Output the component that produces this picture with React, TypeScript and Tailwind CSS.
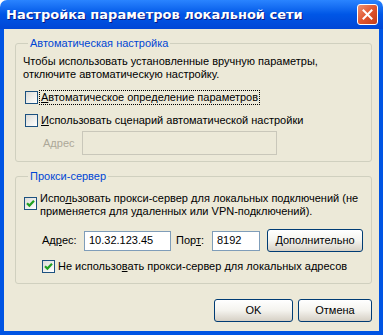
import React from "react";

const font = { fontFamily: '"Liberation Sans", Arial, sans-serif' };

function Check({ checked }: { checked?: boolean }) {
  return (
    <span className="relative inline-block w-[13px] h-[13px] shrink-0 border border-[#1C5180] bg-gradient-to-br from-[#DCDCD7] to-white">
      {checked && (
        <svg className="absolute left-[1px] top-[1px]" width="9" height="9" viewBox="0 0 9 9">
          <path d="M1 4.2 L3.4 6.6 L8 1.8" stroke="#21A121" strokeWidth="2.2" fill="none" />
        </svg>
      )}
    </span>
  );
}

function Btn({ children, w }: { children: React.ReactNode; w: string }) {
  return (
    <div
      className={`${w} h-[23px] rounded-[3px] border border-[#003C74] bg-gradient-to-b from-white via-[#F4F3EE] to-[#D6D0C5] flex items-center justify-center text-black shadow-[inset_0_-1px_0_#D6D0C5]`}
    >
      {children}
    </div>
  );
}

export default function App() {
  return (
    <div className="w-[383px] h-[335px] flex flex-col text-[11px] text-black" style={font}>
      {/* title bar */}
      <div className="h-[29px] shrink-0 rounded-t-[7px] bg-gradient-to-b from-[#2A84FF] via-[#0056E6] to-[#0046D6] flex items-center pl-[6px] pr-[5px]">
        <div className="flex-1 text-white font-bold text-[13px] [text-shadow:1px_1px_0_#0A1883]" style={{ fontFamily: '"DejaVu Sans", sans-serif' }}>
          Настройка параметров локальной сети
        </div>
        <div className="w-[21px] h-[21px] rounded-[3px] border border-white bg-gradient-to-br from-[#EE9070] via-[#E0552E] to-[#C23C18] flex items-center justify-center">
          <svg width="11" height="11" viewBox="0 0 11 11">
            <path d="M1.5 1.5 L9.5 9.5 M9.5 1.5 L1.5 9.5" stroke="white" strokeWidth="2" strokeLinecap="square" />
          </svg>
        </div>
      </div>
      {/* body */}
      <div className="flex-1 flex border-x-4 border-b-4 border-[#0054E3] bg-[#ECE9D8]">
        <div className="flex-1 flex flex-col pl-[11px] pr-[7px] pt-[8px]">
          <fieldset className="border border-[#D0D0BF] rounded-[3px] h-[125px] pl-[7px] pr-[6px]">
            <legend className="ml-[5px] px-[2px] text-[#0046D5] leading-[13px]">Автоматическая настройка</legend>
            <div className="mt-[5px] leading-[13px]">
              Чтобы использовать установленные вручную параметры,
              <br />
              отключите автоматическую настройку.
            </div>
            <div className="mt-[9px] flex items-center h-[14px] ml-[2px]">
              <Check />
              <span className="ml-[2px] px-[1px] outline-1 outline-dotted outline-black leading-[13px]">
                <u>А</u>втоматическое определение параметров
              </span>
            </div>
            <div className="mt-[9px] flex items-center h-[14px] ml-[2px]">
              <Check />
              <span className="ml-[3px]">
                <u>И</u>спользовать сценарий автоматической настройки
              </span>
            </div>
            <div className="mt-[4px] flex items-center ml-[20px]">
              <span className="w-[39px] text-[#ACA899]">А<u>д</u>рес</span>
              <div className="w-[195px] h-[24px] border border-[#C9C7BA] bg-[#ECE9D8]" />
            </div>
          </fieldset>
          <fieldset className="mt-[8px] border border-[#D0D0BF] rounded-[3px] h-[114px] pl-[7px] pr-[6px]">
            <legend className="ml-[5px] px-[2px] text-[#0046D5] leading-[13px]">Прокси-сервер</legend>
            <div className="mt-[14px] flex items-start ml-[1px]">
              <Check checked />
              <span className="ml-[3px] -mt-[5px] leading-[13px]">
                Испо<u>л</u>ьзовать прокси-сервер для локальных подключений (не
                <br />
                применяется для удаленных или VPN-подключений).
              </span>
            </div>
            <div className="mt-[11px] flex items-center ml-[19px]">
              <span className="w-[42px]">Ад<u>р</u>ес:</span>
              <div className="w-[87px] h-[20px] border border-[#7F9DB9] bg-white flex items-center pl-[4px]">10.32.123.45</div>
              <span className="ml-[5px] w-[36px]">Пор<u>т</u>:</span>
              <div className="w-[48px] h-[20px] border border-[#7F9DB9] bg-white flex items-center pl-[4px]">8192</div>
              <div className="ml-[7px]">
                <Btn w="w-[96px]">
                  <span><u>Д</u>ополнительно</span>
                </Btn>
              </div>
            </div>
            <div className="mt-[6px] flex items-center ml-[19px]">
              <Check checked />
              <span className="ml-[3px]">
                Не использо<u>в</u>ать прокси-сервер для локальных адресов
              </span>
            </div>
          </fieldset>
          <div className="mt-[15px] flex justify-end gap-[5px] pr-[0px]">
            <Btn w="w-[79px]">OK</Btn>
            <Btn w="w-[74px]">Отмена</Btn>
          </div>
        </div>
      </div>
    </div>
  );
}
